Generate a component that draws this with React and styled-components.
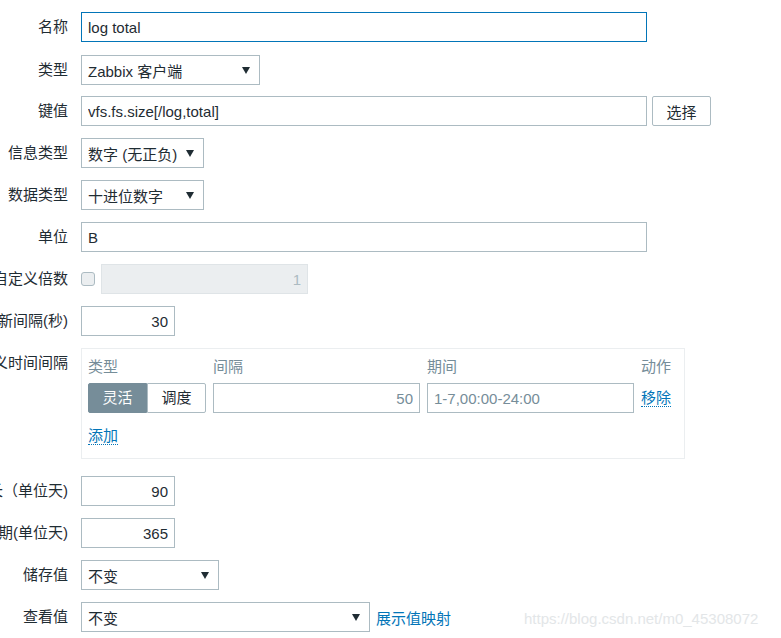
import React from "react"
import styled, { createGlobalStyle } from "styled-components"

const GlobalStyle = createGlobalStyle`
  html, body {
    margin: 0;
    padding: 0;
    background: #ffffff;
    overflow: hidden;
  }
  body {
    font-family: "Liberation Sans", Arial, "Noto Sans CJK SC", sans-serif;
    font-size: 15px;
    color: #1f2c33;
  }
`

const Page = styled.div`
  position: relative;
  width: 781px;
  height: 638px;
  padding-top: 12px;
  box-sizing: border-box;
`

const Row = styled.div`
  display: flex;
  align-items: flex-start;
  margin-bottom: ${(p) => p.$gap || 12}px;
`

const Label = styled.div`
  width: 68px;
  flex-shrink: 0;
  display: flex;
  justify-content: flex-end;
  white-space: nowrap;
  line-height: 30px;
  margin-right: 13px;
  color: #1f2c33;
`

const Field = styled.div`
  display: flex;
  align-items: center;
  gap: ${(p) => p.$gap || 6}px;
`

const TextInput = styled.input`
  box-sizing: border-box;
  width: ${(p) => p.$width}px;
  height: 30px;
  padding: 0 6px;
  border: 1px solid ${(p) => (p.$focused ? "#0275b8" : "#acbbc2")};
  border-radius: 0;
  outline: none;
  font: inherit;
  font-size: 15px;
  text-align: ${(p) => p.$align || "left"};
  color: ${(p) => (p.$muted ? "#768d99" : "#1f2c33")};
  background: #ffffff;

  &:disabled {
    background: #ebeef0;
    color: #acbbc2;
    border-color: #dfe4e7;
  }
`

const Select = styled.div`
  box-sizing: border-box;
  width: ${(p) => p.$width}px;
  height: 30px;
  padding: 0 9px 0 6px;
  border: 1px solid #acbbc2;
  display: flex;
  align-items: center;
  justify-content: space-between;
  white-space: nowrap;
  background: #ffffff;
`

const Arrow = styled.span`
  width: 0;
  height: 0;
  border-left: 4px solid transparent;
  border-right: 4px solid transparent;
  border-top: 7px solid #1f2c33;
`

const Button = styled.button`
  box-sizing: border-box;
  width: 59px;
  height: 30px;
  border: 1px solid #acbbc2;
  border-radius: 2px;
  background: #ffffff;
  font: inherit;
  font-size: 15px;
  color: #1f2c33;
  padding: 0;
`

const Checkbox = styled.span`
  box-sizing: border-box;
  width: 14px;
  height: 14px;
  border: 1px solid #acbbc2;
  border-radius: 3px;
  background: #ebeef0;
`

const IntervalBox = styled.div`
  box-sizing: border-box;
  width: 604px;
  height: 111px;
  border: 1px solid #ebeef0;
  padding: 6px 6px 0 6px;
`

const IntervalGrid = styled.div`
  display: grid;
  grid-template-columns: 118px 207px 207px auto;
  column-gap: 7px;
  row-gap: 4px;
  align-items: center;
`

const HeadCell = styled.div`
  line-height: 24px;
  color: #768d99;
`

const Segment = styled.div`
  display: flex;
`

const SegButton = styled.div`
  box-sizing: border-box;
  width: 59px;
  height: 30px;
  line-height: 28px;
  text-align: center;
  border: 1px solid ${(p) => (p.$active ? "#768d99" : "#acbbc2")};
  background: ${(p) => (p.$active ? "#768d99" : "#ffffff")};
  color: ${(p) => (p.$active ? "#ffffff" : "#1f2c33")};
  border-radius: ${(p) => (p.$active ? "2px 0 0 2px" : "0 2px 2px 0")};
`

const DottedLink = styled.a`
  color: #0275b8;
  text-decoration: none;
  border-bottom: 1px dotted #0275b8;
  line-height: 18px;
  cursor: pointer;
`

const AddLine = styled.div`
  margin-top: 11px;
  line-height: 24px;
`

const PlainLink = styled.a`
  color: #0275b8;
  text-decoration: none;
  cursor: pointer;
`

const Watermark = styled.div`
  position: absolute;
  left: 524px;
  top: 608px;
  line-height: 22px;
  font-size: 15px;
  color: #e3e6e8;
  white-space: nowrap;
`

const App = () => {
  return (
    <Page>
      <GlobalStyle />
      <Row $gap={13}>
        <Label>名称</Label>
        <TextInput $width={566} $focused readOnly value="log total" />
      </Row>
      <Row $gap={11}>
        <Label>类型</Label>
        <Select $width={179}>
          <span>Zabbix 客户端</span>
          <Arrow />
        </Select>
      </Row>
      <Row>
        <Label>键值</Label>
        <Field $gap={5}>
          <TextInput $width={566} readOnly value="vfs.fs.size[/log,total]" />
          <Button>选择</Button>
        </Field>
      </Row>
      <Row>
        <Label>信息类型</Label>
        <Select $width={123}>
          <span>数字 (无正负)</span>
          <Arrow />
        </Select>
      </Row>
      <Row>
        <Label>数据类型</Label>
        <Select $width={123}>
          <span>十进位数字</span>
          <Arrow />
        </Select>
      </Row>
      <Row>
        <Label>单位</Label>
        <TextInput $width={566} readOnly value="B" />
      </Row>
      <Row>
        <Label>使用自定义倍数</Label>
        <Field>
          <Checkbox />
          <TextInput $width={207} $align="right" disabled value="1" />
        </Field>
      </Row>
      <Row>
        <Label>更新间隔(秒)</Label>
        <TextInput $width={94} $align="right" readOnly value="30" />
      </Row>
      <Row $gap={17}>
        <Label>自定义时间间隔</Label>
        <IntervalBox>
          <IntervalGrid>
            <HeadCell>类型</HeadCell>
            <HeadCell>间隔</HeadCell>
            <HeadCell>期间</HeadCell>
            <HeadCell>动作</HeadCell>
            <Segment>
              <SegButton $active>灵活</SegButton>
              <SegButton>调度</SegButton>
            </Segment>
            <TextInput $width={207} $align="right" $muted readOnly value="50" />
            <TextInput $width={207} $muted readOnly value="1-7,00:00-24:00" />
            <div>
              <DottedLink>移除</DottedLink>
            </div>
          </IntervalGrid>
          <AddLine>
            <DottedLink>添加</DottedLink>
          </AddLine>
        </IntervalBox>
      </Row>
      <Row>
        <Label>历史数据保留时长（单位天)</Label>
        <TextInput $width={94} $align="right" readOnly value="90" />
      </Row>
      <Row>
        <Label>趋势存储周期(单位天)</Label>
        <TextInput $width={94} $align="right" readOnly value="365" />
      </Row>
      <Row>
        <Label>储存值</Label>
        <Select $width={138}>
          <span>不变</span>
          <Arrow />
        </Select>
      </Row>
      <Row>
        <Label>查看值</Label>
        <Field>
          <Select $width={289}>
            <span>不变</span>
            <Arrow />
          </Select>
          <PlainLink>展示值映射</PlainLink>
        </Field>
      </Row>
      <Watermark>https://blog.csdn.net/m0_45308072</Watermark>
    </Page>
  )
}

export default App
